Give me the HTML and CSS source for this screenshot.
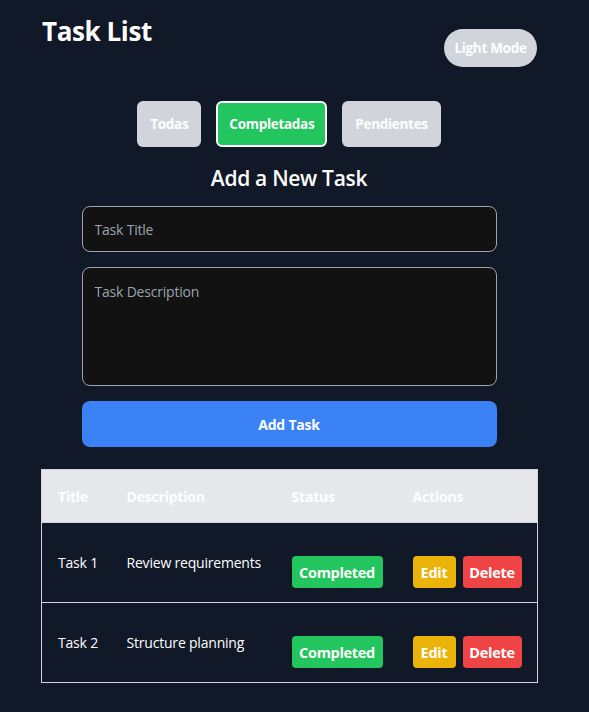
FILE: index.html
```html
<!DOCTYPE html>
<html lang="en">
<head>
<meta charset="utf-8">
<title>Task List</title>
<link rel="stylesheet" href="styles.css">
</head>
<body>
<div class="app">
  <header class="top">
    <h1 class="title">Task List</h1>
    <button class="mode-btn">Light Mode</button>
  </header>
  <div class="filters">
    <button class="filter">Todas</button>
    <button class="filter active">Completadas</button>
    <button class="filter">Pendientes</button>
  </div>
  <h2 class="subtitle">Add a New Task</h2>
  <form class="task-form">
    <input class="field" type="text" placeholder="Task Title">
    <textarea class="field area" placeholder="Task Description"></textarea>
    <button type="button" class="add-btn">Add Task</button>
  </form>
  <table class="tasks">
    <thead>
      <tr>
        <th class="c-title">Title</th>
        <th class="c-desc">Description</th>
        <th class="c-status">Status</th>
        <th class="c-actions">Actions</th>
      </tr>
    </thead>
    <tbody>
      <tr>
        <td class="txt">Task 1</td>
        <td class="txt">Review requirements</td>
        <td class="ctl"><span class="badge done">Completed</span></td>
        <td class="ctl"><span class="actions"><button class="badge edit">Edit</button><button class="badge del">Delete</button></span></td>
      </tr>
      <tr>
        <td class="txt">Task 2</td>
        <td class="txt">Structure planning</td>
        <td class="ctl"><span class="badge done">Completed</span></td>
        <td class="ctl"><span class="actions"><button class="badge edit">Edit</button><button class="badge del">Delete</button></span></td>
      </tr>
    </tbody>
  </table>
</div>
</body>
</html>
```

FILE: styles.css
```css
* { box-sizing: border-box; }
html, body { margin: 0; padding: 0; }
body {
  background: #111827;
  color: #ffffff;
  font-family: "Open Sans", "Noto Sans", sans-serif;
}
.app {
  width: 496px;
  margin-left: 41px;
  padding-bottom: 20px;
}
.top {
  display: flex;
  justify-content: space-between;
  align-items: flex-start;
}
.title {
  margin: 13px 0 0 1px;
  font-size: 26px;
  font-weight: 700;
  line-height: 36px;
  letter-spacing: -0.4px;
}
.mode-btn {
  margin-top: 29px;
  height: 38px;
  width: 93px;
  border: none;
  border-radius: 999px;
  background: #d1d5db;
  color: #ffffff;
  font-family: inherit;
  font-size: 13.5px;
  font-weight: 700;
  letter-spacing: -0.3px;
  padding: 0;
}
.filters {
  display: flex;
  justify-content: center;
  gap: 15px;
  margin-top: 34px;
}
.filter {
  height: 46px;
  padding: 0 11px;
  border: 2px solid transparent;
  border-radius: 6px;
  background: #d1d5db;
  color: #ffffff;
  font-family: inherit;
  font-size: 13.5px;
  font-weight: 700;
  letter-spacing: -0.3px;
}
.filter.active {
  background: #22c55e;
  border-color: #ffffff;
}
.subtitle {
  margin: 16px 0 0;
  text-align: center;
  font-size: 21px;
  font-weight: 600;
  line-height: 30px;
  letter-spacing: -0.3px;
}
.task-form {
  width: 415px;
  margin: 13px auto 0;
  display: flex;
  flex-direction: column;
  gap: 15px;
}
.field {
  display: block;
  width: 100%;
  height: 46px;
  background: #121212;
  border: 1.5px solid #9ca3af;
  border-radius: 8px;
  color: #ffffff;
  font-family: inherit;
  font-size: 14px;
  padding: 0 12px;
  outline: none;
}
.field::placeholder { color: #9ca3af; letter-spacing: -0.2px; }
.area {
  height: 119px;
  padding: 14px 12px;
  resize: none;
}
.add-btn {
  height: 46px;
  border: none;
  border-radius: 8px;
  background: #3b82f6;
  color: #ffffff;
  font-family: inherit;
  font-size: 14px;
  font-weight: 700;
  letter-spacing: -0.2px;
}
.tasks {
  margin-top: 22px;
  width: 496px;
  border-collapse: collapse;
  border: 1px solid #d1d5db;
  table-layout: fixed;
  font-size: 14px;
}
.tasks th {
  background: #e5e7eb;
  color: #ffffff;
  height: 53px;
  text-align: left;
  padding: 0 0 0 16px;
  font-weight: 700;
  letter-spacing: -0.2px;
}
.c-title { width: 69px; }
.c-desc { width: 165px; }
.c-status { width: 121px; }
.c-actions { width: 141px; }
.tasks td {
  border-top: 1px solid #d1d5db;
  padding: 0 0 0 16px;
  text-align: left;
}
.tasks td.txt {
  vertical-align: top;
  padding-top: 30px;
  letter-spacing: -0.2px;
}
.tasks td.ctl {
  vertical-align: top;
  padding-top: 33px;
  padding-bottom: 14px;
}
.actions {
  display: flex;
  gap: 7px;
}
.badge {
  display: inline-flex;
  align-items: center;
  justify-content: center;
  height: 32px;
  border: none;
  border-radius: 4px;
  color: #ffffff;
  font-family: inherit;
  font-size: 14.5px;
  font-weight: 700;
  letter-spacing: -0.3px;
  padding: 0;
}
.done { background: #22c55e; width: 91px; }
.edit { background: #eab308; width: 43px; }
.del { background: #ef4444; width: 59px; }
```
